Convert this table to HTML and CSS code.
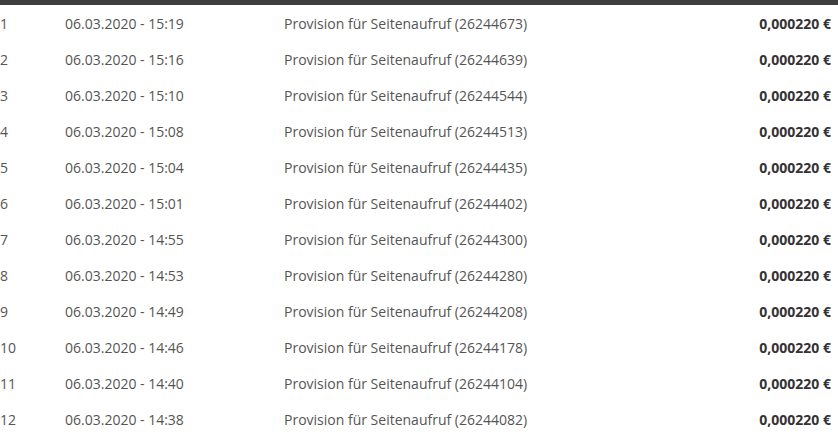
FILE: index.html
```html
<!DOCTYPE html>
<html lang="de">
<head>
<meta charset="utf-8">
<link rel="stylesheet" href="styles.css">
</head>
<body>
<div class="topbar"></div>
<table class="list">
<tbody>
<tr><td class="num">1</td><td class="date">06.03.2020 - 15:19</td><td class="desc">Provision für Seitenaufruf (26244673)</td><td class="amt">0,000220 €</td></tr>
<tr><td class="num">2</td><td class="date">06.03.2020 - 15:16</td><td class="desc">Provision für Seitenaufruf (26244639)</td><td class="amt">0,000220 €</td></tr>
<tr><td class="num">3</td><td class="date">06.03.2020 - 15:10</td><td class="desc">Provision für Seitenaufruf (26244544)</td><td class="amt">0,000220 €</td></tr>
<tr><td class="num">4</td><td class="date">06.03.2020 - 15:08</td><td class="desc">Provision für Seitenaufruf (26244513)</td><td class="amt">0,000220 €</td></tr>
<tr><td class="num">5</td><td class="date">06.03.2020 - 15:04</td><td class="desc">Provision für Seitenaufruf (26244435)</td><td class="amt">0,000220 €</td></tr>
<tr><td class="num">6</td><td class="date">06.03.2020 - 15:01</td><td class="desc">Provision für Seitenaufruf (26244402)</td><td class="amt">0,000220 €</td></tr>
<tr><td class="num">7</td><td class="date">06.03.2020 - 14:55</td><td class="desc">Provision für Seitenaufruf (26244300)</td><td class="amt">0,000220 €</td></tr>
<tr><td class="num">8</td><td class="date">06.03.2020 - 14:53</td><td class="desc">Provision für Seitenaufruf (26244280)</td><td class="amt">0,000220 €</td></tr>
<tr><td class="num">9</td><td class="date">06.03.2020 - 14:49</td><td class="desc">Provision für Seitenaufruf (26244208)</td><td class="amt">0,000220 €</td></tr>
<tr><td class="num">10</td><td class="date">06.03.2020 - 14:46</td><td class="desc">Provision für Seitenaufruf (26244178)</td><td class="amt">0,000220 €</td></tr>
<tr><td class="num">11</td><td class="date">06.03.2020 - 14:40</td><td class="desc">Provision für Seitenaufruf (26244104)</td><td class="amt">0,000220 €</td></tr>
<tr><td class="num">12</td><td class="date">06.03.2020 - 14:38</td><td class="desc">Provision für Seitenaufruf (26244082)</td><td class="amt">0,000220 €</td></tr>
</tbody>
</table>
</body>
</html>
```

FILE: styles.css
```css
html, body {
  margin: 0;
  padding: 0;
  background: #fff;
}
body {
  font-family: "Open Sans", "Liberation Sans", sans-serif;
  font-size: 14px;
  color: #555;
  overflow: hidden;
}
.topbar {
  height: 5px;
  background: #3f3f3f;
}
.list {
  width: 838px;
  border-collapse: collapse;
  table-layout: fixed;
}
.list td {
  height: 36px;
  padding: 0;
  vertical-align: middle;
  white-space: nowrap;
}
.list .num { width: 65px; }
.list .date { width: 219px; }
.list .amt {
  width: 160px;
  text-align: right;
  font-weight: bold;
  color: #333;
  padding-right: 7px;
}
```
